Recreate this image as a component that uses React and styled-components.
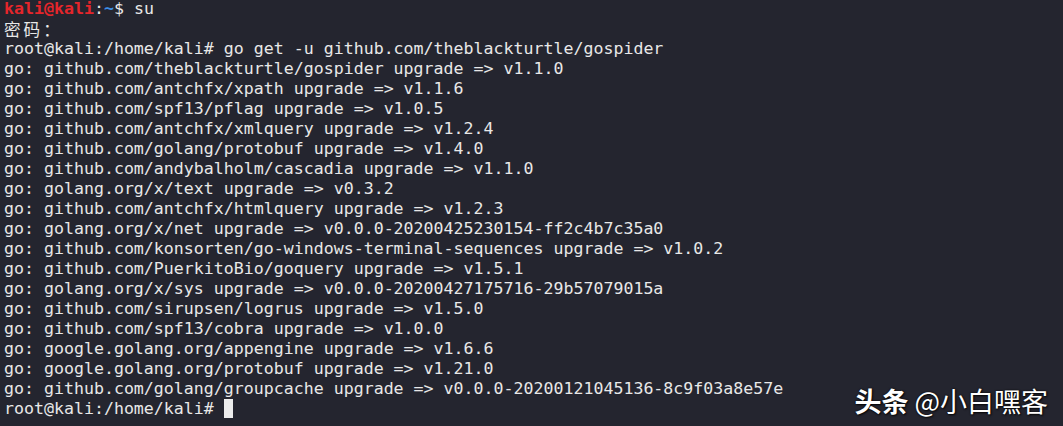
import React from 'react';
import styled, { createGlobalStyle } from 'styled-components';

const GlobalStyle = createGlobalStyle`
  html, body {
    margin: 0;
    padding: 0;
    background: #24252f;
  }
`;

const Terminal = styled.div`
  position: relative;
  width: 1063px;
  height: 426px;
  overflow: hidden;
  background: #24252f;
  padding: 0 0 0 4px;
  box-sizing: border-box;
  font-family: 'DejaVu Sans Mono', 'Liberation Mono', 'Noto Sans CJK SC', monospace;
  font-size: 16.6px;
  color: #e8e8e8;
`;

const Lines = styled.div`
  margin-top: -1px;
`;

const Line = styled.div`
  height: 20px;
  line-height: 20px;
  white-space: pre;
`;

const User = styled.span`
  color: #e5262b;
  font-weight: bold;
`;

const Path = styled.span`
  color: #3d8fe8;
  font-weight: bold;
`;

const Cjk = styled.span`
  font-family: 'Noto Sans CJK SC', sans-serif;
  letter-spacing: 3px;
`;

const Cursor = styled.span`
  display: inline-block;
  width: 9px;
  height: 19px;
  vertical-align: -4px;
  background: #ececec;
`;

const Watermark = styled.div`
  position: absolute;
  right: 15px;
  bottom: 9px;
  font-family: 'Noto Sans CJK SC', sans-serif;
  font-size: 27px;
  line-height: 1.2;
  color: #ffffff;
  text-shadow: 0 0 2px rgba(0, 0, 0, 0.9), 1px 1px 2px rgba(0, 0, 0, 0.8);
  white-space: pre;
`;

const Bold = styled.span`
  font-weight: bold;
`;

const output = [
  'go: github.com/theblackturtle/gospider upgrade => v1.1.0',
  'go: github.com/antchfx/xpath upgrade => v1.1.6',
  'go: github.com/spf13/pflag upgrade => v1.0.5',
  'go: github.com/antchfx/xmlquery upgrade => v1.2.4',
  'go: github.com/golang/protobuf upgrade => v1.4.0',
  'go: github.com/andybalholm/cascadia upgrade => v1.1.0',
  'go: golang.org/x/text upgrade => v0.3.2',
  'go: github.com/antchfx/htmlquery upgrade => v1.2.3',
  'go: golang.org/x/net upgrade => v0.0.0-20200425230154-ff2c4b7c35a0',
  'go: github.com/konsorten/go-windows-terminal-sequences upgrade => v1.0.2',
  'go: github.com/PuerkitoBio/goquery upgrade => v1.5.1',
  'go: golang.org/x/sys upgrade => v0.0.0-20200427175716-29b57079015a',
  'go: github.com/sirupsen/logrus upgrade => v1.5.0',
  'go: github.com/spf13/cobra upgrade => v1.0.0',
  'go: google.golang.org/appengine upgrade => v1.6.6',
  'go: google.golang.org/protobuf upgrade => v1.21.0',
  'go: github.com/golang/groupcache upgrade => v0.0.0-20200121045136-8c9f03a8e57e',
];

const App = () => (
  <>
    <GlobalStyle />
    <Terminal>
      <Lines>
        <Line>
          <User>kali@kali</User>:<Path>~</Path>$ su
        </Line>
        <Line>
          <Cjk>密码：</Cjk>
        </Line>
        <Line>root@kali:/home/kali# go get -u github.com/theblackturtle/gospider</Line>
        {output.map((text, i) => (
          <Line key={i}>{text}</Line>
        ))}
        <Line>
          root@kali:/home/kali# <Cursor />
        </Line>
      </Lines>
      <Watermark>
        <Bold>头条</Bold> @小白嘿客
      </Watermark>
    </Terminal>
  </>
);

export default App;
